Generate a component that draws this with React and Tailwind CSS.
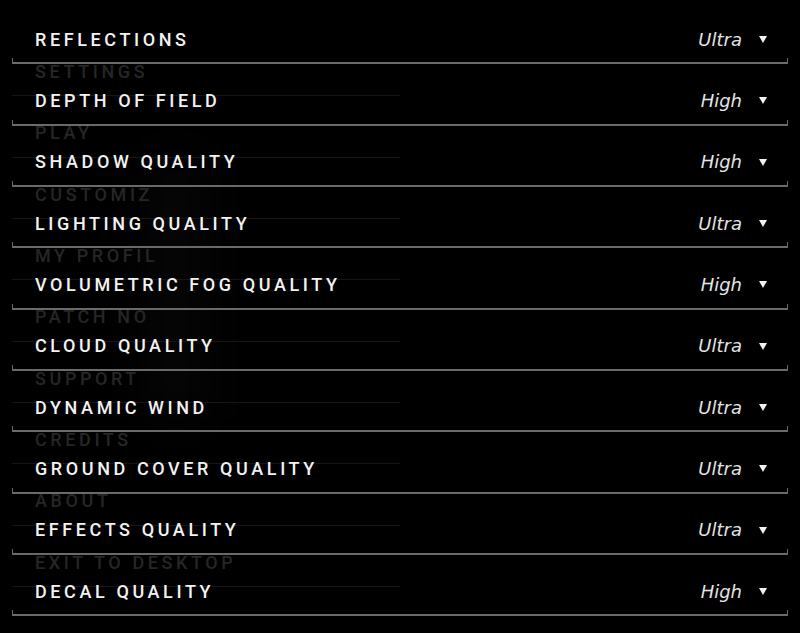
import React from 'react'

const SETTINGS = [
  { label: 'REFLECTIONS',            value: 'Ultra' },
  { label: 'DEPTH OF FIELD',         value: 'High' },
  { label: 'SHADOW QUALITY',         value: 'High' },
  { label: 'LIGHTING QUALITY',       value: 'Ultra' },
  { label: 'VOLUMETRIC FOG QUALITY', value: 'High' },
  { label: 'CLOUD QUALITY',          value: 'Ultra' },
  { label: 'DYNAMIC WIND',           value: 'Ultra' },
  { label: 'GROUND COVER QUALITY',   value: 'Ultra' },
  { label: 'EFFECTS QUALITY',        value: 'Ultra' },
  { label: 'DECAL QUALITY',          value: 'High' },
]

// faded main menu that sits behind the settings panel
const MENU = [
  'SETTINGS', 'PLAY', 'CUSTOMIZ', 'MY PROFIL', 'PATCH NO',
  'SUPPORT', 'CREDITS', 'ABOUT', 'EXIT TO DESKTOP',
]

function Caret() {
  return (
    <svg width="8" height="7" viewBox="0 0 8 7" className="shrink-0">
      <polygon points="0,0 8,0 4,7" fill="#f2f2f2" />
    </svg>
  )
}

function SettingRow({ label, value }) {
  return (
    <div className="relative mx-[12px] h-[61.33px] flex items-center pt-[14px] pl-[23px] pr-[21px] border-b-2 border-[#6a6a6a]">
      <span className="flex-1 text-[18px] leading-none font-medium tracking-[3.6px] text-[#f2f2f2] font-['Roboto',sans-serif]">
        {label}
      </span>
      <span className="text-[18px] leading-none italic text-[#e4e4e4] font-['DejaVu_Sans',sans-serif] mr-[17px]">
        {value}
      </span>
      <Caret />
      {/* end ticks */}
      <span className="absolute left-0 bottom-0 w-px h-[4px] bg-[#6a6a6a]" />
      <span className="absolute right-0 bottom-0 w-px h-[4px] bg-[#6a6a6a]" />
    </div>
  )
}

export default function App() {
  return (
    <div className="relative w-full h-[633px] bg-black overflow-hidden">
      {/* ── Background menu ─────────────────────────────────────── */}
      <div className="absolute inset-0 pt-[35px]">
        <div className="absolute left-[145px] top-[160px] w-[60px] h-[260px] bg-white/[0.025] blur-xl" />
        {MENU.map((item) => (
          <div
            key={item}
            className="relative ml-[12px] w-[388px] h-[61.33px] flex items-center pt-[14px] pl-[23px] border-b border-[#161616]"
          >
            <span className="text-[18px] leading-none font-medium tracking-[3.6px] text-[#262626] font-['Roboto',sans-serif]">
              {item}
            </span>
          </div>
        ))}
      </div>

      {/* ── Settings list ───────────────────────────────────────── */}
      <div className="relative pt-[3px]">
        {SETTINGS.map((s) => (
          <SettingRow key={s.label} {...s} />
        ))}
      </div>
    </div>
  )
}
